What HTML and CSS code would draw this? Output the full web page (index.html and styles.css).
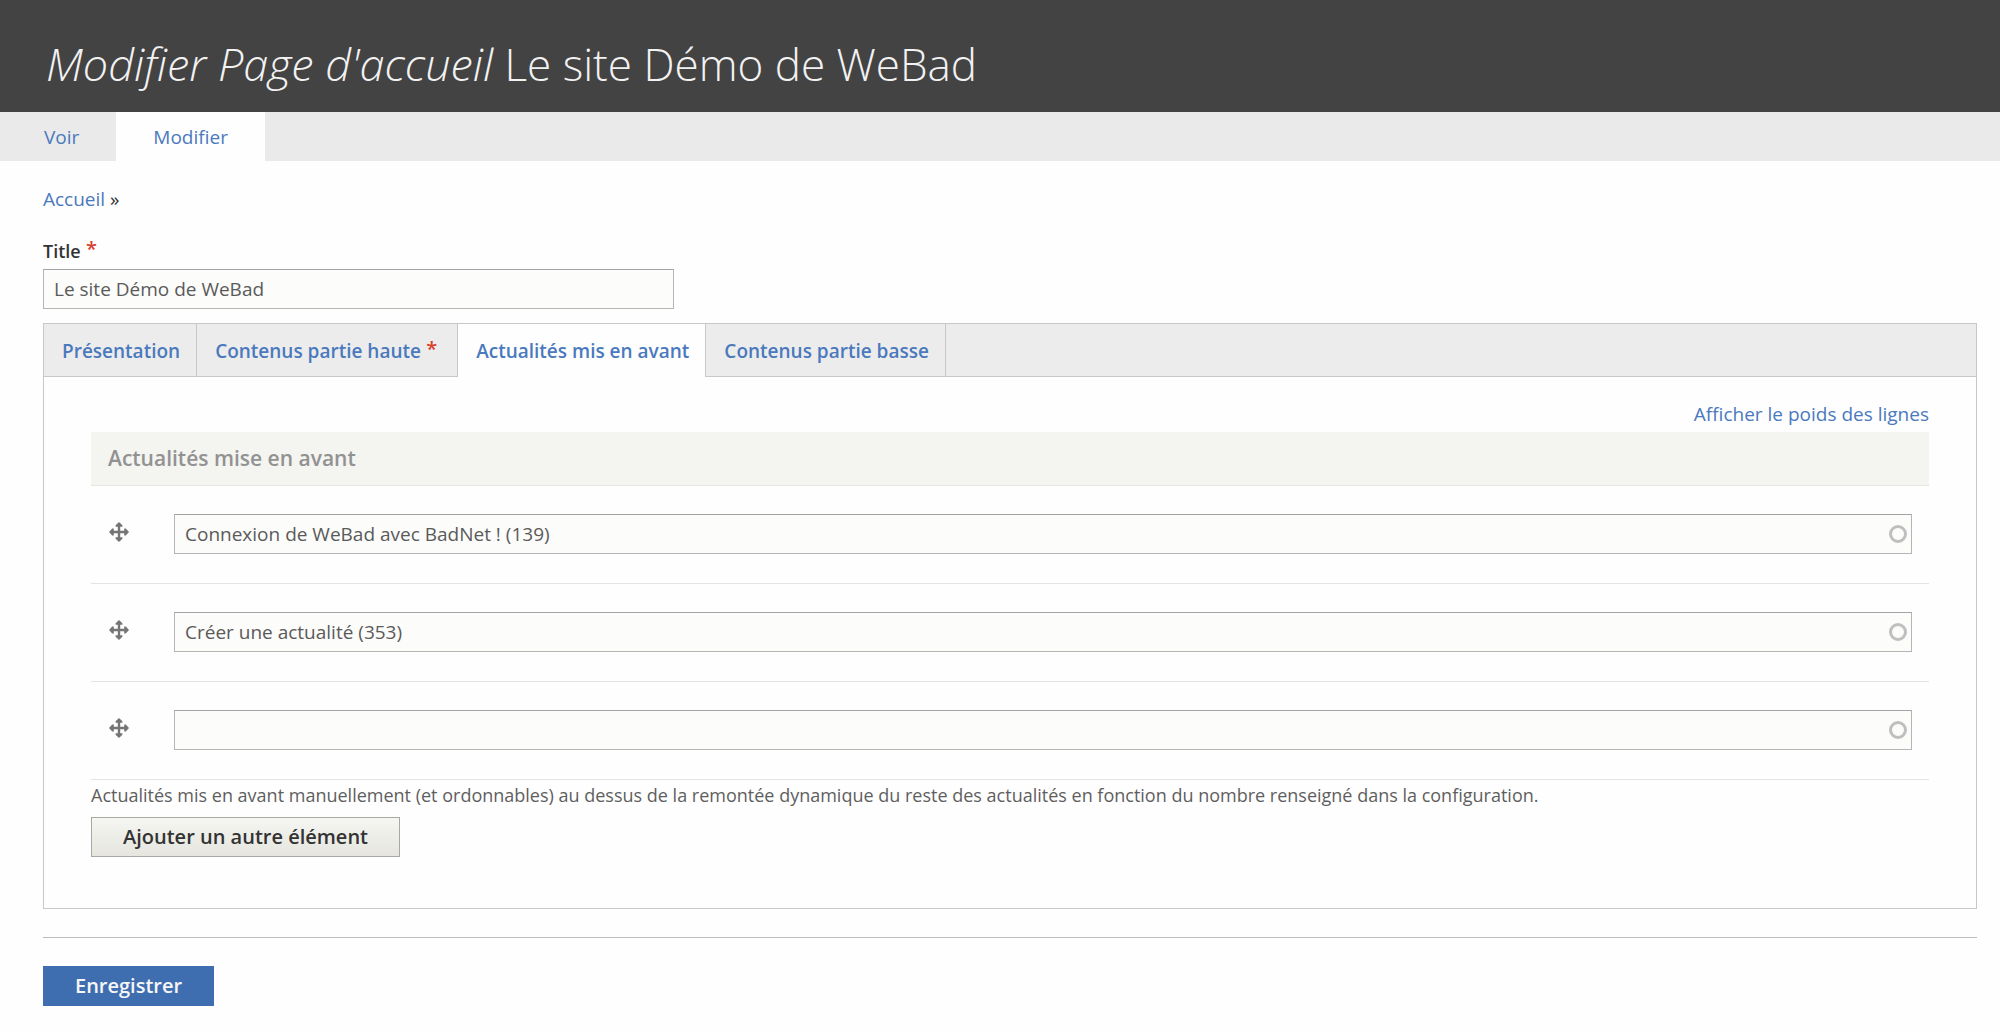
FILE: index.html
```html
<!DOCTYPE html>
<html lang="fr">

<head>
  <meta charset="UTF-8">
  <meta name="viewport" content="width=device-width, initial-scale=1.0">
  <title>Modifier Page d'accueil Le site Démo de WeBad</title>
  <link rel="stylesheet" href="styles.css">
</head>

<body>
  <svg class="sprite" aria-hidden="true">
    <symbol id="move" viewBox="0 0 20 20">
      <path d="M10 0 13.4 3.2V4.8H11.2V8.8H15.2V6.6H16.8L20 10 16.8 13.4H15.2V11.2H11.2V15.2H13.4V16.8L10 20 6.6 16.8V15.2H8.8V11.2H4.8V13.4H3.2L0 10 3.2 6.6H4.8V8.8H8.8V4.8H6.6V3.2Z" />
    </symbol>
  </svg>

  <header class="header">
    <h1 class="page-title"><em>Modifier Page d'accueil</em> Le site Démo de WeBad</h1>
  </header>

  <nav class="primary-tabs">
    <a href="#">Voir</a>
    <a href="#" class="active">Modifier</a>
  </nav>

  <main class="content">
    <nav class="breadcrumb"><a href="#">Accueil</a> »</nav>

    <form>
      <div class="form-item">
        <label class="required" for="title">Title</label>
        <input type="text" class="form-text title-field" id="title" value="Le site Démo de WeBad">
      </div>

      <div class="field-group">
        <div class="group-tabs">
          <a href="#">Présentation</a>
          <a href="#" class="required">Contenus partie haute</a>
          <a href="#" class="active">Actualités mis en avant</a>
          <a href="#">Contenus partie basse</a>
        </div>

        <div class="group-pane">
          <div class="weight-toggle"><a href="#">Afficher le poids des lignes</a></div>
          <table class="field-table">
            <thead>
              <tr>
                <th colspan="2">Actualités mise en avant</th>
              </tr>
            </thead>
            <tbody>
              <tr>
                <td class="drag"><a href="#" aria-label="Déplacer"><svg class="handle"><use href="#move" /></svg></a></td>
                <td>
                  <div class="autocomplete">
                    <input type="text" class="form-text" aria-label="Actualité 1" value="Connexion de WeBad avec BadNet ! (139)">
                    <span class="throbber"></span>
                  </div>
                </td>
              </tr>
              <tr>
                <td class="drag"><a href="#" aria-label="Déplacer"><svg class="handle"><use href="#move" /></svg></a></td>
                <td>
                  <div class="autocomplete">
                    <input type="text" class="form-text" aria-label="Actualité 2" value="Créer une actualité (353)">
                    <span class="throbber"></span>
                  </div>
                </td>
              </tr>
              <tr>
                <td class="drag"><a href="#" aria-label="Déplacer"><svg class="handle"><use href="#move" /></svg></a></td>
                <td>
                  <div class="autocomplete">
                    <input type="text" class="form-text" aria-label="Actualité 3" value="">
                    <span class="throbber"></span>
                  </div>
                </td>
              </tr>
            </tbody>
          </table>
          <p class="description">Actualités mis en avant manuellement (et ordonnables) au dessus de la remontée dynamique du reste des actualités en fonction du nombre renseigné dans la configuration.</p>
          <button type="button" class="button">Ajouter un autre élément</button>
        </div>
      </div>

      <div class="form-actions">
        <button type="submit" class="button button-primary">Enregistrer</button>
      </div>
    </form>
  </main>
</body>

</html>
```

FILE: styles.css
```css
* {
  box-sizing: border-box;
}

body {
  margin: 0;
  background: #fefefe;
  color: #333;
  font-family: "Open Sans", sans-serif;
  font-size: 19px;
  line-height: 28px;
}

a {
  color: #4a79bd;
  text-decoration: none;
}

a:hover {
  text-decoration: underline;
}

.sprite {
  display: none;
}

/* Header */
.header {
  background: #434343;
  padding: 34px 46px 18px;
}

.page-title {
  margin: 0;
  color: #f2f2f2;
  font-size: 44px;
  font-weight: 300;
  line-height: 60px;
}

.page-title em {
  font-size: 45px;
}

.primary-tabs {
  display: flex;
  background: #eaeaea;
}

.primary-tabs a {
  padding: 11px 37px 10px;
}

.primary-tabs a:first-child {
  padding-left: 44px;
}

.primary-tabs .active {
  background: #fefefe;
}

.content {
  padding: 24px 23px 26px 43px;
}

.breadcrumb {
  margin-bottom: 24px;
}

/* Form elements */
.form-item {
  margin-bottom: 14px;
}

.form-item label {
  display: block;
  margin-bottom: 4px;
  font-size: 18px;
  font-weight: 600;
}

.required::after {
  content: " *";
  color: #d93f2d;
  font-size: 20px;
  line-height: 20px;
  vertical-align: 2px;
}

.form-text {
  display: block;
  width: 100%;
  height: 40px;
  padding: 0 10px;
  border: 1px solid #b5b5b3;
  border-top-color: #a4a4a4;
  border-radius: 0;
  background: #fcfcfa;
  color: #5a5a5a;
  font-family: inherit;
  font-size: 19px;
}

.title-field {
  width: 631px;
  max-width: 100%;
}

/* Horizontal tabs */
.field-group {
  border: 1px solid #c8c8c8;
}

.group-tabs {
  display: flex;
  background: #ececec;
  box-shadow: inset 0 -1px #c8c8c8;
}

.group-tabs a {
  padding: 13px 16px 12px 18px;
  border-right: 1px solid #c8c8c8;
  font-weight: 600;
}

.group-tabs .active {
  background: #fefefe;
}

.group-tabs .required {
  padding-right: 20px;
}

.group-pane {
  padding: 23px 47px 51px;
}

.weight-toggle {
  margin-bottom: 4px;
  text-align: right;
}

/* Draggable table */
.field-table {
  width: 100%;
  border-collapse: collapse;
}

.field-table th {
  padding: 12px 17px 13px;
  background: #f4f4f1;
  border-bottom: 1px solid #e6e6e0;
  color: #929292;
  font-weight: 600;
  font-size: 21px;
  text-align: left;
}

.field-table td {
  padding: 28px 17px 29px;
  border-bottom: 1px solid #e4e4e0;
  vertical-align: top;
}

.field-table .drag {
  width: 66px;
  padding-right: 0;
}

.handle {
  display: block;
  width: 20px;
  height: 20px;
  margin: 8px 0 0 1px;
  fill: #757575;
}

.autocomplete {
  position: relative;
}

.throbber {
  position: absolute;
  top: 11px;
  right: 5px;
  width: 18px;
  height: 18px;
  border: 3px solid #bfbfbf;
  border-radius: 50%;
}

.description {
  margin: 1px 0 8px;
  color: #5e5e5e;
  font-size: 18px;
}

/* Buttons */
.button {
  display: block;
  height: 40px;
  padding: 0 31px;
  border: 1px solid #a8a8a4;
  background: linear-gradient(#f5f5f2, #e6e6df);
  color: #333;
  font-family: inherit;
  font-size: 20px;
  font-weight: 600;
  line-height: 28px;
  cursor: pointer;
}

.button-primary {
  border-color: #3f6eb0;
  background: #3f6eb0;
  color: #f6f6f6;
}

.form-actions {
  margin-top: 28px;
  padding-top: 28px;
  border-top: 1px solid #bdbdbd;
}
```
